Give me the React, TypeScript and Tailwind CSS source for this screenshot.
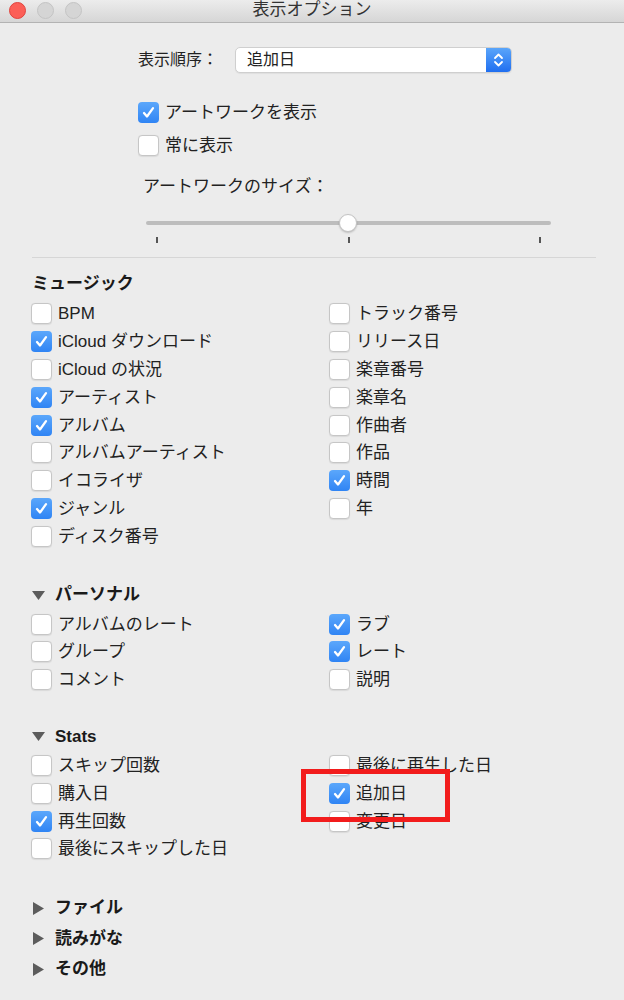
const font = { fontFamily: '"Liberation Sans", "Noto Sans CJK JP", sans-serif' };

function Box({ on }: { on?: boolean }) {
  if (on) {
    return (
      <span className="flex h-[21px] w-[21px] shrink-0 items-center justify-center rounded-[4px] bg-linear-to-b from-[#5ba7fb] to-[#2f84f4]">
        <svg width="15" height="15" viewBox="0 0 15 15">
          <path d="M3 8 L6 11.5 L12 3.2" fill="none" stroke="white" strokeWidth="2.3" strokeLinecap="round" strokeLinejoin="round" />
        </svg>
      </span>
    );
  }
  return <span className="h-[21px] w-[21px] shrink-0 rounded-[4px] border border-[#c6c6c6] bg-white shadow-[0_0.5px_1px_rgba(0,0,0,0.08)]" />;
}

function Row({ label, on }: { label: string; on?: boolean }) {
  return (
    <div className="flex h-[27.8px] items-center gap-[6px]">
      <Box on={on} />
      <span className="text-[17px] leading-none text-[#222]">{label}</span>
    </div>
  );
}

function Down() {
  return (
    <svg width="13" height="9" viewBox="0 0 13 9" className="shrink-0">
      <path d="M0 0 H13 L6.5 9 Z" fill="#5c5c5c" />
    </svg>
  );
}

function Right() {
  return (
    <svg width="13" height="13" viewBox="0 0 13 13" className="shrink-0">
      <path d="M1 0 L12 6.5 L1 13 Z" fill="#5c5c5c" />
    </svg>
  );
}

function Columns({ left, right }: { left: [string, boolean?][]; right: [string, boolean?][] }) {
  return (
    <div className="grid grid-cols-[298px_1fr] pl-[31px]">
      <div className="flex flex-col">
        {left.map(([l, on]) => (
          <Row key={l} label={l} on={on} />
        ))}
      </div>
      <div className="flex flex-col">
        {right.map(([l, on]) => (
          <Row key={l} label={l} on={on} />
        ))}
      </div>
    </div>
  );
}

export default function App() {
  return (
    <div className="relative h-[1000px] w-[624px] overflow-hidden bg-[#ececec]" style={font}>
      {/* Title bar */}
      <div className="relative flex h-[23px] items-center border-b border-[#b3b3b3] bg-linear-to-b from-[#ececec] to-[#d6d6d6]">
        <div className="flex items-center gap-[11px] pb-[2px] pl-[9px]">
          <span className="h-[17px] w-[17px] rounded-full border border-[#e0443e] bg-[#fc5f57]" />
          <span className="h-[17px] w-[17px] rounded-full border border-[#c4c4c4] bg-[#d5d5d5]" />
          <span className="h-[17px] w-[17px] rounded-full border border-[#c4c4c4] bg-[#d5d5d5]" />
        </div>
        <div className="absolute inset-x-0 top-0 flex h-[20px] items-center justify-center text-[17px] text-[#333]">
          表示オプション
        </div>
      </div>

      {/* Sort popup */}
      <div className="mt-[24px] flex h-[26px] items-center pl-[138px]">
        <span className="w-[97px] text-[16px] text-[#222]">表示順序：</span>
        <div className="flex h-[26px] w-[277px] items-stretch overflow-hidden rounded-[5px] border border-[#cfcfcf] bg-white shadow-[0_1px_1px_rgba(0,0,0,0.06)]">
          <span className="flex flex-1 items-center pl-[11px] text-[16px] text-[#222]">追加日</span>
          <span className="flex w-[25px] items-center justify-center bg-linear-to-b from-[#5aa5fa] to-[#1f6ef0]">
            <svg width="11" height="16" viewBox="0 0 11 16">
              <path d="M2 6 L5.5 2.5 L9 6 M2 10 L5.5 13.5 L9 10" fill="none" stroke="white" strokeWidth="1.8" strokeLinecap="round" strokeLinejoin="round" />
            </svg>
          </span>
        </div>
      </div>

      {/* Artwork options */}
      <div className="mt-[23px] flex flex-col pl-[138px]">
        <div className="flex h-[33px] items-center gap-[6px]">
          <Box on />
          <span className="text-[17px] leading-none text-[#222]">アートワークを表示</span>
        </div>
        <div className="flex h-[33px] items-center gap-[6px]">
          <Box />
          <span className="text-[17px] leading-none text-[#222]">常に表示</span>
        </div>
      </div>

      <div className="mt-[13px] flex h-[24px] items-center pl-[143px] text-[17px] text-[#222]">アートワークのサイズ：</div>

      {/* Slider */}
      <div className="relative ml-[146px] mt-[14px] flex h-[20px] w-[405px] items-center">
        <div className="h-[4px] w-full rounded-full bg-[#bdbdbd]" />
        <span className="absolute left-[193px] top-[1px] h-[18px] w-[18px] rounded-full border border-[#c4c4c4] bg-white shadow-[0_1px_2px_rgba(0,0,0,0.2)]" />
      </div>
      <div className="ml-[146px] mt-[4px] flex h-[6px] w-[405px] justify-between px-[10px]">
        <span className="h-full w-[2px] bg-[#555]" />
        <span className="h-full w-[2px] bg-[#555]" />
        <span className="h-full w-[2px] bg-[#555]" />
      </div>

      <div className="ml-[32px] mr-[28px] mt-[14px] h-px bg-[#d6d6d6]" />

      {/* Music */}
      <div className="mt-[12px] flex h-[28px] items-center pl-[32px] text-[17px] font-bold text-[#1a1a1a]">ミュージック</div>
      <div className="mt-[2px]">
        <Columns
          left={[
            ['BPM'],
            ['iCloud ダウンロード', true],
            ['iCloud の状況'],
            ['アーティスト', true],
            ['アルバム', true],
            ['アルバムアーティスト'],
            ['イコライザ'],
            ['ジャンル', true],
            ['ディスク番号'],
          ]}
          right={[
            ['トラック番号'],
            ['リリース日'],
            ['楽章番号'],
            ['楽章名'],
            ['作曲者'],
            ['作品'],
            ['時間', true],
            ['年'],
          ]}
        />
      </div>

      {/* Personal */}
      <div className="mt-[31px] flex h-[28px] items-center gap-[10px] pl-[32px] text-[17px] font-bold text-[#1a1a1a]">
        <Down />
        <span>パーソナル</span>
      </div>
      <div className="mt-px">
        <Columns
          left={[['アルバムのレート'], ['グループ'], ['コメント']]}
          right={[['ラブ', true], ['レート', true], ['説明']]}
        />
      </div>

      {/* Stats */}
      <div className="mt-[29px] flex h-[28px] items-center gap-[10px] pl-[32px] text-[17px] font-bold text-[#1a1a1a]">
        <Down />
        <span>Stats</span>
      </div>
      <div className="mt-px">
        <Columns
          left={[['スキップ回数'], ['購入日'], ['再生回数', true], ['最後にスキップした日']]}
          right={[['最後に再生した日'], ['追加日', true], ['変更日']]}
        />
      </div>

      {/* Collapsed sections */}
      <div className="mt-[30px] flex flex-col pl-[32px] text-[17px] font-bold text-[#1a1a1a]">
        {['ファイル', '読みがな', 'その他'].map((t) => (
          <div key={t} className="flex h-[30.5px] items-center gap-[10px]">
            <Right />
            <span>{t}</span>
          </div>
        ))}
      </div>

      {/* Annotation */}
      <div className="absolute left-[301px] top-[769px] h-[53px] w-[149px] border-[5px] border-[#f21c1c]" />
    </div>
  );
}
